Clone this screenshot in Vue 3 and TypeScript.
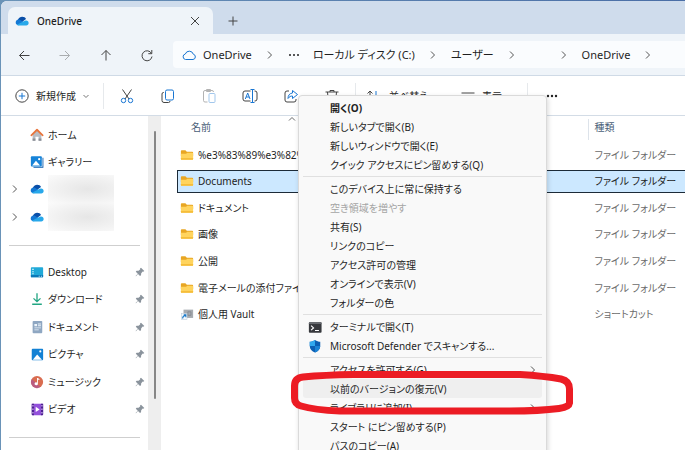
<script setup lang="ts">
import { ref } from 'vue'

interface Place { label: string; icon: string; expandable?: boolean; masked?: boolean }
interface Entry { name: string; kind: string; icon: string }
interface Command { label: string; icon?: string; bold?: boolean; disabled?: boolean; submenu?: boolean; active?: boolean }

const cloud = '<path fill="#0a4fa8" d="M3 7.5C3.5 4.5 6 3 8.300 3c2 0 3.600 1 4.300 2.600L8 9z"/><path fill="#1478d4" d="M.8 9.500C.9 7.600 2.400 6.300 4 6.300c1 0 2 .4 3.400 1.300L13 11l-9 1.800C2 12.800.7 11.400.8 9.500z"/><path fill="#28a8ea" d="M2 12.200l7.500-3.500 2.600-1.200c2-.4 3.500 1 3.500 2.800 0 1.500-1.200 2.700-2.700 2.700H4.200c-.9 0-1.700-.3-2.200-.8z"/>'

const icons: Record<string, string> = {
  cloud,
  home: '<path fill="#b9bcc2" d="M3 7l5-5 5 5v7.500H9.800V10H6.200v4.500H3z"/><path fill="#8b8f96" d="M3 12h3.200v2.500H3zM9.800 12H13v2.500H9.800z"/><path fill="none" stroke="#e8743b" stroke-width="2" stroke-linecap="round" stroke-linejoin="round" d="M1.500 8.300L8 2l6.500 6.300"/>',
  gallery: '<path fill="#0b5cad" d="M14.300 3h1v11.500H4v-1h10.300z"/><rect x="1" y="1.500" width="12.500" height="11.500" rx="1" fill="#1683d8"/><path fill="#fff" d="M2.500 12l4.300-5.500L11.500 12z"/><circle cx="10.500" cy="4.800" r="1.300" fill="#fff"/>',
  desktop: '<rect x="1" y="2.500" width="14" height="11.500" rx="1" fill="#20a9d8"/><path fill="#0a79b8" d="M1 11.500h14V13a1 1 0 0 1-1 1H2a1 1 0 0 1-1-1z"/><path fill="#e3fbff" d="M2.600 4.300h1.600v1.400H2.600zM2.600 7h1.600v1.400H2.600zM2.600 9.500h1.600v1.200H2.600zM10 12.300h1v1h-1zM12.500 12.300h1v1h-1z"/>',
  download: '<path fill="none" stroke="#22a683" stroke-width="1.500" d="M8 1.500v9.500M4 7.300L8 11l4-3.700M2.500 14h11"/>',
  document: '<rect x="3" y="1" width="11" height="14" rx="1" fill="#8fa7c2"/><path fill="#eef5fb" d="M5 4.500h3v2.500H5zM9 4h3.500v1H9zM9 6h3.500v1H9zM5 8.500h7.500v1H5zM5 10.800h5v1H5z"/>',
  picture: '<rect x="2" y="2" width="13" height="13" rx="1" fill="#1381d4"/><path fill="#fff" d="M3.200 14.500l5-6 5.500 6z"/><circle cx="11.800" cy="5" r="1.200" fill="#fff"/>',
  music: '<circle cx="8" cy="8" r="7" fill="#d96c50"/><path fill="#a9559a" opacity=".65" d="M2 4.500A7 7 0 0 0 8 15a7 7 0 0 0 4-1.300z"/><path fill="#fff" d="M8 3.500h1l2 1.300-.6 1-1.400-.8v5A1.900 1.700 0 1 1 8 8.500z"/>',
  video: '<rect x="2" y="2" width="13" height="13" rx="1" fill="#9350db"/><path fill="#4d2191" d="M2 2h2.500v13H3a1 1 0 0 1-1-1zM12.500 2H15v12a1 1 0 0 1-1 1h-1.500z"/><path fill="#d9c0f5" d="M2.700 3.500H4V5H2.700zM2.700 7.500H4V9H2.700zM2.700 11.500H4V13H2.700zM13 3.500h1.300V5H13zM13 7.500h1.300V9H13zM13 11.500h1.300V13H13z"/><path fill="#fff" d="M6.500 5.500l4.500 3-4.500 3z"/>',
  folder: '<path fill="#e8a623" d="M1 3.500a1 1 0 0 1 1-1h4.200l1.600 1.800H14a1 1 0 0 1 1 1V9H1z"/><path fill="#ffd45e" d="M1 6.500h6L8.200 5.500H14a1 1 0 0 1 1 1v6a1 1 0 0 1-1 1H2a1 1 0 0 1-1-1z"/><path fill="#f5bd3b" d="M1 11.500h14v1a1 1 0 0 1-1 1H2a1 1 0 0 1-1-1z"/>',
  vault: '<path fill="#a7abb0" d="M4 3h11v9.500H4z"/><path fill="none" stroke="#83888f" d="M9 5.500h3.500v4H9z"/><rect x="1.500" y="7.500" width="6.500" height="7" fill="#f4f8fc" stroke="#b8c8d8" stroke-width=".6"/><path fill="none" stroke="#1677c8" stroke-width="1.200" d="M3 13c0-2 1-3 3.300-3.200M4.300 9h2.400v2.600"/>',
  terminal: '<rect x="1" y="2.500" width="14.500" height="12" rx="1" fill="#37393d"/><path fill="#686b70" d="M1 3.500a1 1 0 0 1 1-1h12.500a1 1 0 0 1 1 1v1H1z"/><path fill="none" stroke="#fff" stroke-width="1.300" d="M3.500 6.500L6.300 9l-2.800 2.500M8 12h4.500"/>',
  shield: '<path fill="#0c5fb3" d="M8 1c2 1.500 4 2 6 2v5c0 3.500-2.500 6-6 7.500C4.500 14 2 11.500 2 8V3c2 0 4-.5 6-2z"/><path fill="#31a8ee" d="M8 1v7H2V3c2 0 4-.5 6-2z"/><path fill="#1b82d4" d="M8 8h6c0 3.500-2.500 6-6 7.500z"/>',
}

const quickPlaces: Place[] = [
  { label: 'ホーム', icon: 'home' },
  { label: 'ギャラリー', icon: 'gallery' },
  { label: '', icon: 'cloud', expandable: true, masked: true },
  { label: '', icon: 'cloud', expandable: true, masked: true },
]
const pinnedPlaces: Place[] = [
  { label: 'Desktop', icon: 'desktop' },
  { label: 'ダウンロード', icon: 'download' },
  { label: 'ドキュメント', icon: 'document' },
  { label: 'ピクチャ', icon: 'picture' },
  { label: 'ミュージック', icon: 'music' },
  { label: 'ビデオ', icon: 'video' },
]
const crumbs: string[] = ['OneDrive', '…', 'ローカル ディスク (C:)', 'ユーザー', '', 'OneDrive']
const entries: Entry[] = [
  { name: '%e3%83%89%e3%82%', kind: 'ファイル フォルダー', icon: 'folder' },
  { name: 'Documents', kind: 'ファイル フォルダー', icon: 'folder' },
  { name: 'ドキュメント', kind: 'ファイル フォルダー', icon: 'folder' },
  { name: '画像', kind: 'ファイル フォルダー', icon: 'folder' },
  { name: '公開', kind: 'ファイル フォルダー', icon: 'folder' },
  { name: '電子メールの添付ファイル', kind: 'ファイル フォルダー', icon: 'folder' },
  { name: '個人用 Vault', kind: 'ショートカット', icon: 'vault' },
]
const commands: Command[][] = [
  [
    { label: '開く(O)', bold: true },
    { label: '新しいタブで開く(B)' },
    { label: '新しいウィンドウで開く(E)' },
    { label: 'クイック アクセスにピン留めする(Q)' },
  ],
  [
    { label: 'このデバイス上に常に保持する' },
    { label: '空き領域を増やす', disabled: true },
    { label: '共有(S)' },
    { label: 'リンクのコピー' },
    { label: 'アクセス許可の管理' },
    { label: 'オンラインで表示(V)' },
    { label: 'フォルダーの色' },
  ],
  [
    { label: 'ターミナルで開く(T)', icon: 'terminal' },
    { label: 'Microsoft Defender でスキャンする...', icon: 'shield' },
  ],
  [
    { label: 'アクセスを許可する(G)', submenu: true },
    { label: '以前のバージョンの復元(V)', active: true },
    { label: 'ライブラリに追加(I)', submenu: true },
    { label: 'スタート にピン留めする(P)' },
    { label: 'パスのコピー(A)' },
  ],
]
const selected = ref(1)
</script>

<template>
  <div class="desktop">
    <div class="window">
      <header class="titlebar">
        <div class="tab">
          <svg class="icon" viewBox="0 0 16 16" v-html="icons.cloud"></svg>
          <span class="tab-title">OneDrive</span>
          <button class="plain" aria-label="閉じる">
            <svg class="glyph" viewBox="0 0 16 16"><path d="M4 4l8 8M12 4l-8 8" /></svg>
          </button>
        </div>
        <button class="plain new-tab" aria-label="新しいタブ">
          <svg class="glyph" viewBox="0 0 16 16"><path d="M8 3.500v9M3.500 8h9" /></svg>
        </button>
      </header>

      <div class="navbar">
        <div class="history">
          <button class="plain" aria-label="戻る"><svg class="glyph" viewBox="0 0 16 16"><path d="M13.500 8.500h-10M8 4L3.500 8.500 8 13" /></svg></button>
          <button class="plain faded" aria-label="進む"><svg class="glyph" viewBox="0 0 16 16"><path d="M2.500 8.500h10M8 4l4.500 4.500L8 13" /></svg></button>
          <button class="plain" aria-label="上へ"><svg class="glyph" viewBox="0 0 16 16"><path d="M8 13.500v-10M3.500 8L8 3.500 12.500 8" /></svg></button>
          <button class="plain" aria-label="更新"><svg class="glyph" viewBox="0 0 16 16"><path d="M12.500 6.500a5 5 0 1 0 .5 3M12.800 3v3.700H9.300" /></svg></button>
        </div>
        <nav class="address" aria-label="アドレス">
          <svg class="glyph blue" viewBox="0 0 16 16"><path d="M4.500 12.500h7.500a2.700 2.700 0 0 0 .3-5.300A4.200 4.200 0 0 0 4.300 7a2.800 2.800 0 0 0 .2 5.500z" /></svg>
          <template v-for="(crumb, i) in crumbs" :key="i">
            <button v-if="crumb === '…'" class="plain" aria-label="その他"><svg class="dots" viewBox="0 0 12 4"><circle cx="2" cy="2" r="1" /><circle cx="6" cy="2" r="1" /><circle cx="10" cy="2" r="1" /></svg></button>
            <template v-else>
              <span v-if="!crumb" class="blank"></span>
              <button v-else class="plain crumb">{{ crumb }}</button>
              <svg class="chevron" viewBox="0 0 10 10"><path d="M3 1.500L6.500 5 3 8.500" /></svg>
            </template>
          </template>
        </nav>
      </div>

      <div class="toolbar">
        <button class="plain create">
          <svg class="glyph" viewBox="0 0 16 16"><circle cx="8" cy="8" r="6.200" /><path class="blue" d="M8 4.800v6.400M4.800 8h6.400" /></svg>
          <span>新規作成</span>
          <svg class="tiny" viewBox="0 0 8 8"><path d="M1.500 3L4 5.500 6.500 3" /></svg>
        </button>
        <span class="divider"></span>
        <div class="actions">
          <button class="plain" aria-label="切り取り"><svg class="glyph" viewBox="0 0 16 16"><path d="M3.500 1.500l6.500 9.500M12.500 1.500L6 11" /><g class="blue"><circle cx="4.500" cy="12.500" r="2.200" /><circle cx="11.500" cy="12.500" r="2.200" /></g></svg></button>
          <button class="plain" aria-label="コピー"><svg class="glyph" viewBox="0 0 16 16"><path d="M4 4.500H3.500A1.500 1.500 0 0 0 2 6v6.500A2 2 0 0 0 4 14.500h4.500a1.500 1.500 0 0 0 1.500-1.500" /><rect class="blue" x="5.500" y="2" width="8" height="10" rx="1.500" /></svg></button>
          <button class="plain faded" aria-label="貼り付け"><svg class="glyph" viewBox="0 0 16 16"><path d="M6.500 14H4a1.500 1.500 0 0 1-1.500-1.500V4A1.500 1.500 0 0 1 4 2.500h7A1.500 1.500 0 0 1 12.500 4M5.500 2.500V1.500h4v2h-4z" /><rect class="blue" x="8" y="5.500" width="6" height="9" rx="1" /></svg></button>
          <button class="plain" aria-label="名前の変更"><svg class="glyph" viewBox="0 0 16 16"><path d="M8.500 3H3a2 2 0 0 0-2 2v6a2 2 0 0 0 2 2h5.500M12.500 3H13a2 2 0 0 1 2 2v6a2 2 0 0 1-2 2h-.5" /><path class="blue" d="M8.500 1.500h4M10.500 1.500v13M8.500 14.500h4M3.300 11l2.400-6 2.300 6M4.200 9h3" /></svg></button>
          <button class="plain" aria-label="共有"><svg class="glyph" viewBox="0 0 16 16"><path d="M6 3H4a2 2 0 0 0-2 2v7a2 2 0 0 0 2 2h7a2 2 0 0 0 2-2v-1" /><path class="blue" d="M9.500 2.500V5C6.500 5.300 5 7.500 5 10.500 6.500 8.500 7.500 8 9.500 8v2.500l5-4z" /></svg></button>
          <button class="plain" aria-label="削除"><svg class="glyph" viewBox="0 0 16 16"><path d="M1.500 4h13M6 4V2.500h4V4M3.500 4l1 10.500h7l1-10.500M6.500 7v4.500M9.500 7v4.500" /></svg></button>
        </div>
        <span class="divider"></span>
        <button class="plain sort">
          <svg class="glyph" viewBox="0 0 16 16"><path d="M5 13.500V3M2.500 5.500L5 3l2.500 2.500" /><path class="blue" d="M11 3v10.500M8.500 11l2.500 2.500 2.500-2.500" /></svg>
          <span>並べ替え</span>
        </button>
        <button class="plain view">
          <svg class="glyph" viewBox="0 0 16 16"><path d="M1.500 5h13M1.500 9h13M1.500 13h13" /></svg>
          <span>表示</span>
        </button>
        <span class="divider"></span>
        <button class="plain more" aria-label="もっと見る"><svg class="dots" viewBox="0 0 12 4"><circle cx="2" cy="2" r="1.200" /><circle cx="6" cy="2" r="1.200" /><circle cx="10" cy="2" r="1.200" /></svg></button>
      </div>

      <div class="body">
        <aside class="sidebar">
          <ul class="places quick">
            <li v-for="(place, i) in quickPlaces" :key="i">
              <svg v-if="place.expandable" class="chevron" viewBox="0 0 10 10"><path d="M3 1.500L6.500 5 3 8.500" /></svg>
              <span v-else></span>
              <a href="#"><svg class="icon" viewBox="0 0 16 16" v-html="icons[place.icon]"></svg><span v-if="place.masked" class="mask"></span><span v-else>{{ place.label }}</span></a>
            </li>
          </ul>
          <hr />
          <ul class="places pinned">
            <li v-for="place in pinnedPlaces" :key="place.label">
              <span></span>
              <a href="#"><svg class="icon" viewBox="0 0 16 16" v-html="icons[place.icon]"></svg><span>{{ place.label }}</span></a>
              <svg class="pin" viewBox="0 0 10 10"><path d="M6 .8L9.300 4l-1 .8-.6-.2-1.500 1.700-.2 2-1 .7-2-2L1 9.300.6 9l2.200-2.200-2-2 .8-1 2-.1 1.700-1.500L5 1.500z" /></svg>
            </li>
          </ul>
          <hr />
        </aside>
        <div class="gutter"><div class="thumb"></div></div>
        <main class="files">
          <table>
            <thead>
              <tr><th class="name-head">名前<svg class="sorted" viewBox="0 0 8 5"><path d="M1 4.500l3-3 3 3" /></svg></th><th class="kind">種類</th></tr>
            </thead>
            <tbody>
              <tr v-for="(entry, i) in entries" :key="entry.name" :class="{ selected: i === selected }" @click="selected = i">
                <td><div class="file"><svg class="icon" viewBox="0 0 16 16" v-html="icons[entry.icon]"></svg><span>{{ entry.name }}</span></div></td>
                <td class="kind">{{ entry.kind }}</td>
              </tr>
            </tbody>
          </table>
        </main>
      </div>
    </div>

    <div class="menu" role="menu">
      <div v-for="(group, g) in commands" :key="g" class="group" role="group">
        <button v-for="cmd in group" :key="cmd.label" role="menuitem" :disabled="cmd.disabled" :class="['item', { bold: cmd.bold, active: cmd.active }]">
          <svg v-if="cmd.icon" class="icon" viewBox="0 0 16 16" v-html="icons[cmd.icon]"></svg>
          <span v-else></span>
          <span>{{ cmd.label }}</span>
          <svg v-if="cmd.submenu" class="chevron" viewBox="0 0 10 10"><path d="M3 1.500L6.500 5 3 8.500" /></svg>
        </button>
      </div>
    </div>

    <svg class="ring" viewBox="0 0 284 46" aria-hidden="true">
      <path d="M64 5.500H230Q254 7 271 10Q279.500 12 279.500 20V34Q279 38 269 39.500Q250 42 220 42H50Q24 41 11 37Q4.500 35 4.500 29V17Q4.500 9 13 8Q34 6 64 5.500Z" />
    </svg>
  </div>
</template>

<style>
body { margin: 0; }
</style>

<style scoped>
.desktop {
  position: relative;
  box-sizing: border-box;
  height: 100vh;
  padding: 1px 0 0 1px;
  overflow: hidden;
  background: linear-gradient(90deg, #6a93b8, #4a6ea6);
  color: #1f1f1f;
  font: 10px/16px "Noto Sans", "Noto Sans CJK JP", sans-serif;
  font-feature-settings: "palt";
}
button { font: inherit; font-feature-settings: inherit; color: inherit; white-space: nowrap; }
.plain { display: flex; align-items: center; padding: 0; border: 0; background: none; }
.faded { opacity: 0.4; }
svg { display: block; flex: none; }
.icon { width: 14px; height: 14px; }
.glyph { width: 16px; height: 16px; fill: none; stroke: #444; stroke-width: 1; }
.blue { stroke: #1976d2; }
.dots { width: 12px; height: 4px; fill: #222; }
.chevron { width: 10px; height: 10px; fill: none; stroke: #555; stroke-width: 1; }
.tiny { width: 8px; height: 8px; fill: none; stroke: #777; }

.window { display: flex; flex-direction: column; height: 100%; overflow: hidden; border-radius: 6px 0 0 0; background: #fff; }
.titlebar { display: flex; height: 33px; padding: 6px 0 0 7px; box-sizing: border-box; background: #cfdcec; }
.tab { display: flex; align-items: center; gap: 8px; width: 205px; padding: 0 10px 0 7px; box-sizing: border-box; border-radius: 7px 7px 0 0; background: #eff4f9; }
.tab-title { flex: 1; font-weight: 500; }
.new-tab { margin-left: 12px; }

.navbar { display: flex; align-items: center; gap: 18px; height: 42px; padding-left: 15px; box-sizing: border-box; border-bottom: 1px solid #cfdae6; background: #eff4f9; }
.history { display: flex; gap: 25px; }
.address { display: flex; flex: 1; align-items: center; gap: 13px; height: 27px; padding-left: 8px; border-radius: 4px 0 0 4px; background: #fafcfe; font-size: 11px; }
.address > .blue { margin-right: -7px; }
.blank { width: 16px; }

.toolbar { display: flex; align-items: center; height: 40px; padding: 0 14px 0 13px; box-sizing: border-box; border-bottom: 1px solid #d3dce6; }
.create { gap: 6px; width: 89px; }
.divider { width: 1px; height: 26px; background: #e6e9ec; }
.actions { display: flex; gap: 25px; padding: 0 15px; }
.sort { gap: 8px; width: 93px; padding-left: 9px; box-sizing: border-box; }
.view { gap: 6px; width: 78px; padding-left: 11px; box-sizing: border-box; }
.more { padding-left: 18px; }

.body { display: flex; flex: 1; min-height: 0; }
.sidebar { width: 147px; }
.places { display: grid; grid-auto-rows: 1fr; margin: 0; padding: 0 3px 0 9px; list-style: none; }
.quick { height: 110px; margin-top: 5px; }
.pinned { height: 165px; }
.places li { display: grid; grid-template-columns: 20px 1fr 10px; align-items: center; }
.places a { display: flex; align-items: center; gap: 4px; color: inherit; text-decoration: none; white-space: nowrap; }
.pin { width: 10px; height: 10px; fill: #8a939c; }
.mask { width: 66px; height: 28px; background: radial-gradient(ellipse at 60% 50%, #e6e6e6, #f0f0f0 50%, #fbfbfb); }
hr { height: 1px; margin: 14px 8px 12px; border: 0; background: #cfcfcf; }
.gutter { display: flex; justify-content: center; width: 13px; padding-top: 15px; box-sizing: border-box; background: #eee; }
.thumb { width: 2px; height: 268px; border-radius: 1px; background: #868686; }

.files { flex: 1; min-width: 0; padding-left: 16px; }
table { width: 100%; height: 213px; border-spacing: 0 3px; table-layout: fixed; }
th { height: 21px; padding: 0; color: #4a6078; font-weight: 400; line-height: 16px; text-align: left; vertical-align: top; }
.name-head { position: relative; box-sizing: border-box; width: 81%; padding-left: 14px; }
.sorted { position: absolute; top: -3px; left: 111px; width: 8px; height: 5px; fill: none; stroke: #666; }
th.kind { border-left: 1px solid #dde3ea; }
.kind { padding: 0 0 0 5px; }
td { padding: 0; border: 1px solid transparent; border-width: 1px 0; white-space: nowrap; }
td.kind { padding-left: 6px; color: #6b6b6b; }
.file { display: flex; align-items: center; gap: 4px; padding-left: 3px; }
.selected td { border-color: #1c2b38; background: #cce8ff; color: #222; }
.selected td:first-child { border-left-width: 1px; }
.selected .file { padding-left: 2px; }

.menu { position: absolute; top: 95px; left: 298px; width: 249px; padding: 2px 4px; box-sizing: border-box; border: 1px solid #dadada; border-radius: 4px; background: #f9f9f9; box-shadow: 1px 2px 5px rgba(0, 0, 0, 0.16); }
.group + .group { margin-top: 2px; padding-top: 2px; border-top: 1px solid #e0e0e0; }
.item { display: grid; grid-template-columns: 16px 1fr 10px; align-items: center; gap: 6px; width: 100%; height: 19px; padding: 0 4px 0 5px; border: 0; border-radius: 3px; background: none; text-align: left; }
.item:disabled { color: #a5a5a5; }
.bold { font-weight: 700; }
.active { background: #efefef; }

.ring { position: absolute; top: 369px; left: 290px; width: 284px; height: 46px; fill: none; stroke: #ec1c24; stroke-width: 7; pointer-events: none; }
</style>
